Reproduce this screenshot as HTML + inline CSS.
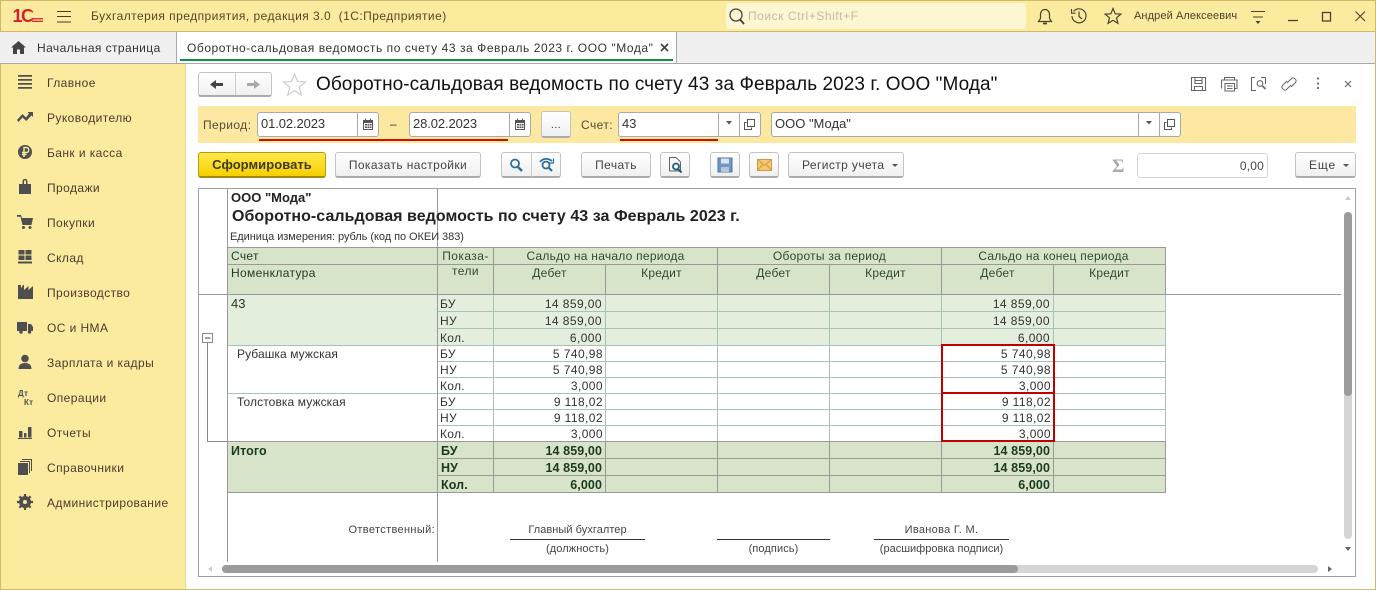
<!DOCTYPE html>
<html><head><meta charset="utf-8"><style>
html,body{margin:0;padding:0}
body{width:1376px;height:590px;overflow:hidden;position:relative;background:#fff;font:12px "Liberation Sans",Arial,sans-serif;color:#333}
div,span,svg{position:absolute;box-sizing:border-box}
.t{white-space:pre;line-height:16px;letter-spacing:.3px}
.l{background:#999}
.s{left:47px;color:#4a3b30;font-size:12px;letter-spacing:.42px}
.f{background:#fff;border:1px solid #aaa;border-radius:3px;height:25px;top:112px}
.b{background:linear-gradient(#fff,#f0f0f0);border:1px solid #c4c4c4;border-bottom:2px solid #ababab;border-radius:3px;height:26px;top:152px;text-align:center;line-height:24px;color:#444;letter-spacing:.4px;white-space:pre}
.r{text-align:right;width:100px;letter-spacing:.42px;color:#333}
.g{color:#1f3a2a}
.B{font-weight:bold;color:#1b3a22;letter-spacing:.1px;font-size:12.5px}
.c{text-align:center;color:#2c4a34;letter-spacing:.25px}
.p{left:440px;color:#333}
.d{font-size:13px;letter-spacing:-.1px}
</style></head><body>
<!-- top bar -->
<div style="left:0;top:0;width:1376px;height:32px;background:#fbeb9e;border:1px solid #c9ba6c;border-bottom:1px solid #c9ba6c"></div>
<div style="left:0;top:32px;width:1376px;height:32px;background:#f0f0f0;border-bottom:1px solid #a9a9a9"></div>
<div style="left:0;top:64px;width:186px;height:525px;background:#fbeb9e;border-left:1px solid #c9ba6c"></div>
<div style="left:185px;top:64px;width:1px;height:525px;background:#e8dc94"></div>
<div style="left:0;top:589px;width:1376px;height:1px;background:#c9ba6c"></div>
<div style="left:1375px;top:0;width:1px;height:590px;background:#c9ba6c"></div>
<!-- logo -->
<svg style="left:12px;top:6px" width="34" height="18">
<text x="0.500" y="16" font-family="Liberation Sans" font-weight="bold" font-size="18" fill="#d5202a">1</text>
<text x="9" y="16" font-family="Liberation Sans" font-weight="bold" font-size="18" fill="#d5202a">С</text>
<path d="M20.500 11.500C17.500 14 13.500 12.500 13.500 9.500C13.500 6.500 17.500 5 20.500 7" fill="none" stroke="#fbeb9e" stroke-width="1"/>
<path d="M20 12.800H31" stroke="#d5202a" stroke-width="1.300"/>
<path d="M20 15.300H31" stroke="#d5202a" stroke-width="1.300"/>
</svg>
<svg style="left:57px;top:9px" width="14" height="15"><path d="M0 2.500H14M0 7.500H14M0 13H14" stroke="#4a3d28" stroke-width="1.100"/></svg>
<span class="t" style="left:91px;top:8px;color:#5a4426;letter-spacing:.46px">Бухгалтерия предприятия, редакция 3.0  (1С:Предприятие)</span>
<!-- search -->
<div style="left:726px;top:3px;width:300px;height:26px;background:#fdf6d0;border-radius:3px"></div>
<svg style="left:728px;top:7px" width="18" height="19"><circle cx="8" cy="8" r="6" fill="none" stroke="#444" stroke-width="1.300"/><path d="M12 12.500L16 17" stroke="#444" stroke-width="2"/></svg>
<span class="t" style="left:748px;top:8px;color:#bcbcb0;letter-spacing:.55px">Поиск Ctrl+Shift+F</span>
<svg style="left:1036px;top:7px" width="18" height="19"><path d="M2.500 14.500H15.500L13.500 11.500V7.500C13.500 4.500 11.500 2.500 9 2.500C6.500 2.500 4.500 4.500 4.500 7.500V11.500Z" fill="none" stroke="#4a4232" stroke-width="1.200"/><path d="M7 16.500H11" stroke="#4a4232" stroke-width="1.800"/></svg>
<svg style="left:1070px;top:7px" width="18" height="18"><path d="M3.500 4.500A7 7 0 1 1 2 9" fill="none" stroke="#4a4232" stroke-width="1.200"/><path d="M1.500 2V6.200H5.500" fill="none" stroke="#4a4232" stroke-width="1.100"/><path d="M9 4.500V9.500L12 12" fill="none" stroke="#4a4232" stroke-width="1.200"/></svg>
<svg style="left:1104px;top:7px" width="18" height="18"><path d="M9 1.500L11.200 6.800L16.800 7.200L12.500 10.800L13.900 16.300L9 13.300L4.100 16.300L5.500 10.800L1.200 7.200L6.800 6.800Z" fill="none" stroke="#4a4232" stroke-width="1.200"/></svg>
<span class="t" style="left:1134px;top:8px;font-size:11px;color:#4a4232;letter-spacing:.1px">Андрей Алексеевич</span>
<svg style="left:1251px;top:10px" width="14" height="15"><path d="M0 1.500H14M2 7H12" stroke="#4a4232" stroke-width="1.100"/><path d="M4.500 11H9.500L7 14Z" fill="#4a4232"/></svg>
<svg style="left:1286px;top:8px" width="80" height="16"><path d="M2 12.500H12" stroke="#4a4232" stroke-width="1.300"/><rect x="36.500" y="4.500" width="8" height="8.500" fill="none" stroke="#4a4232" stroke-width="1.300"/><path d="M69.500 3.500L79 13M79 3.500L69.500 13" stroke="#4a4232" stroke-width="1.100"/></svg>
<!-- tabs -->
<svg style="left:11px;top:41px" width="15" height="13"><path d="M7.500 0L15 6.500H13V13H9V8.500H6V13H2V6.500H0Z" fill="#444"/></svg>
<span class="t" style="left:37px;top:40px;color:#333;letter-spacing:.42px">Начальная страница</span>
<div style="left:176px;top:32px;width:501px;height:32px;background:#fff;border-left:1px solid #a9a9a9;border-right:1px solid #a9a9a9;border-bottom:1px solid #a9a9a9"></div>
<div style="left:180px;top:59px;width:493px;height:2px;background:#119148"></div>
<span class="t" style="left:187px;top:40px;color:#333;letter-spacing:.56px">Оборотно-сальдовая ведомость по счету 43 за Февраль 2023 г. ООО "Мода"</span>
<svg style="left:660px;top:43px" width="9" height="9"><path d="M1 1L8 8M8 1L1 8" stroke="#444" stroke-width="1.700"/></svg>
<!-- sidebar -->
<span class="t s" style="top:75px">Главное</span>
<span class="t s" style="top:110px">Руководителю</span>
<span class="t s" style="top:145px">Банк и касса</span>
<span class="t s" style="top:180px">Продажи</span>
<span class="t s" style="top:215px">Покупки</span>
<span class="t s" style="top:250px">Склад</span>
<span class="t s" style="top:285px">Производство</span>
<span class="t s" style="top:320px">ОС и НМА</span>
<span class="t s" style="top:355px">Зарплата и кадры</span>
<span class="t s" style="top:390px">Операции</span>
<span class="t s" style="top:425px">Отчеты</span>
<span class="t s" style="top:460px">Справочники</span>
<span class="t s" style="top:495px">Администрирование</span>
<svg style="left:16px;top:74px" width="18" height="450">
<g fill="#4f4f4f">
<path d="M2 1H16V2.800H2ZM2 5H16V6.800H2ZM2 9H16V10.800H2ZM2 13H16V14.800H2Z"/>
<path d="M1 46L6.500 40L10 43.500L13 39.500L11.500 38H17V43L15.500 41.500L10.200 47L6.500 43.500L2.500 48Z"/>
<circle cx="9" cy="78" r="7"/>
<path d="M3 110H15V120H3Z"/>
<path d="M6.500 110V107.500C6.500 104 11.500 104 11.500 107.500V110H10V107.500C10 105.800 8 105.800 8 107.500V110Z"/>
<path d="M1 141H5L6 144H17L15.500 151H6.500L4.500 142.800H1Z"/><circle cx="7.500" cy="153.500" r="1.500"/><circle cx="14" cy="153.500" r="1.500"/>
<path d="M2.500 176H8.500V180.500H2.500ZM9.500 176H15.500V180.500H9.500ZM2.500 181.500H8.500V186H2.500ZM9.500 181.500H15.500V186H9.500ZM2 187.500H16V189.500H2Z"/>
<path d="M2 225V211H5V214.500L7 211H8V216L12.500 212V216L17 212V225Z"/>
<path d="M1 248H11V257H1ZM12 250H15L17 253V257H12Z"/><circle cx="5" cy="258" r="1.700"/><circle cx="13.500" cy="258" r="1.700"/>
<circle cx="9" cy="284.500" r="3.800"/><path d="M2.500 295C2.500 290 6 289 9 289C12 289 15.500 290 15.500 295Z"/>
<path d="M3 357H6.500V363.500H3ZM8 359H10.500V363.500H8ZM12 353H15.500V363.500H12ZM2 364H16V365H2Z"/>
<path d="M2 389H12V401H2Z"/><path d="M4 387H14V399H13V388H4ZM6 385H16V397H15V386H6Z"/>
<circle cx="9" cy="428" r="4.500" fill="none" stroke="#4f4f4f" stroke-width="3"/>
<path d="M9 420V436M1 428H17M3.400 422.400L14.600 433.600M14.600 422.400L3.400 433.600" stroke="#4f4f4f" stroke-width="2.200"/>
</g>
<circle cx="9" cy="428" r="2" fill="#fbeb9e"/>
<path d="M8 83V73.500H10.500C13.500 73.500 13.500 78.500 10.500 78.500H6M6 80.500H10.500" fill="none" stroke="#fbeb9e" stroke-width="1.400"/>
</svg>
<span class="t" style="left:18px;top:390px;font:bold 8px/8px 'Liberation Sans',sans-serif;color:#4f4f4f">Дт</span>
<span class="t" style="left:24px;top:399px;font:bold 8px/8px 'Liberation Sans',sans-serif;color:#4f4f4f">Кт</span>
<!-- title row -->
<div class="b" style="left:198px;top:72px;width:74px;height:25px"></div>
<div style="left:235px;top:73px;width:1px;height:22px;background:#ccc"></div>
<svg style="left:209px;top:78px" width="52" height="14"><path d="M1 6.500L7 2V5H14V8H7V11Z" fill="#444"/><path d="M51 6.500L45 2V5H38V8H45V11Z" fill="#aaa"/></svg>
<svg style="left:282px;top:72px" width="25" height="25"><path d="M12.500 2L15.500 9.500L23.500 10L17.300 15.200L19.300 23L12.500 18.700L5.700 23L7.700 15.200L1.500 10L9.500 9.500Z" fill="#fff" stroke="#c9c9c9" stroke-width="1.100"/></svg>
<span class="t" style="left:316px;top:73px;font-size:19px;line-height:24px;color:#111;letter-spacing:.07px">Оборотно-сальдовая ведомость по счету 43 за Февраль 2023 г. ООО "Мода"</span>
<svg style="left:1190px;top:75px" width="170" height="18" fill="none" stroke="#666" stroke-width="1.100">
<path d="M1.500 2.500H15.500V15.500H1.500ZM5 2.500V8.500H12V2.500M5 5.500H12M4.500 15.500V11.500H12.500V15.500"/>
<path d="M34.500 5V2.500H44.500V5M31.500 13.500V5H47V13.500H44M35 8.500H44.500V16H35ZM37 11H42.500M37 13.500H42.500"/>
<path d="M65 2.500H61.500V15.500H66M71 2.500H75.500V9"/><circle cx="70" cy="8.500" r="2.800"/><path d="M72.500 11L75.500 14" stroke-width="1.600"/>
<path d="M97 8L101.500 3.500C103.500 1.500 107.500 5 105.500 7.500L101 12" stroke-width="1"/>
<path d="M101 10L96.500 14.500C94.500 16.500 90.500 13 92.500 10.500L97 6" stroke-width="1"/>
<circle cx="128" cy="3.500" r="1.100" fill="#666" stroke="none"/><circle cx="128" cy="8.500" r="1.100" fill="#666" stroke="none"/><circle cx="128" cy="13" r="1.100" fill="#666" stroke="none"/>
<path d="M155 6L161 12M161 6L155 12"/>
</svg>
<!-- form bar -->
<div style="left:198px;top:106px;width:1158px;height:37px;background:#fce8a0"></div>
<span class="t" style="left:203px;top:117px;color:#55493a;letter-spacing:.42px">Период:</span>
<div class="f" style="left:257px;width:122px"></div><div style="left:357px;top:112px;width:1px;height:25px;background:#aaa"></div>
<span class="t d" style="left:261px;top:116px">01.02.2023</span>
<span class="t" style="left:390px;top:116px">–</span>
<div class="f" style="left:409px;width:122px"></div><div style="left:509px;top:112px;width:1px;height:25px;background:#aaa"></div>
<span class="t d" style="left:413px;top:116px">28.02.2023</span>
<svg style="left:362px;top:118px" width="166" height="12" fill="#555"><path d="M1 2H3V0.500H4V2H8V0.500H9V2H11V12H1ZM2 5V11H10V5Z"/><path d="M3 6H5V7.500H3ZM5.500 6H7.500V7.500H5.500ZM8 6H9.500V7.500H8ZM3 8.500H5V10H3ZM5.500 8.500H7.500V10H5.500ZM8 8.500H9.500V10H8Z"/><path d="M153 2H155V0.500H156V2H160V0.500H161V2H163V12H153ZM154 5V11H162V5Z"/><path d="M155 6H157V7.500H155ZM157.500 6H159.500V7.500H157.500ZM160 6H161.500V7.500H160ZM155 8.500H157V10H155ZM157.500 8.500H159.500V10H157.500ZM160 8.500H161.500V10H160Z"/></svg>
<div style="left:259px;top:139px;width:249px;height:2px;background:#c8120c"></div>
<div style="left:620px;top:139px;width:98px;height:2px;background:#c8120c"></div>
<div class="b" style="left:541px;top:111px;width:30px;height:27px;font-size:11px;line-height:27px">...</div>
<span class="t" style="left:581px;top:117px;color:#55493a;letter-spacing:.42px">Счет:</span>
<div class="f" style="left:618px;width:143px"></div>
<div style="left:718px;top:112px;width:1px;height:25px;background:#aaa"></div><div style="left:739px;top:112px;width:1px;height:25px;background:#aaa"></div>
<span class="t d" style="left:622px;top:116px">43</span>
<div class="f" style="left:771px;width:410px"></div>
<div style="left:1138px;top:112px;width:1px;height:25px;background:#aaa"></div><div style="left:1159px;top:112px;width:1px;height:25px;background:#aaa"></div>
<span class="t" style="left:775px;top:116px;font-size:13px;letter-spacing:0">ООО "Мода"</span>
<svg style="left:724px;top:118px" width="456" height="13" fill="none" stroke="#555"><path d="M2 3H8L5 6.500Z" fill="#555" stroke="none"/><path d="M422 3H428L425 6.500Z" fill="#555" stroke="none"/><path d="M22.500 4.500H20.500V11.500H27.500V9.500M23.500 1.500H30.500V8.500H23.500Z"/><path d="M442.500 4.500H440.500V11.500H447.500V9.500M443.500 1.500H450.500V8.500H443.500Z"/></svg>
<!-- buttons -->
<div class="b" style="left:198px;width:128px;background:linear-gradient(#ffe84a,#f6d000);border-color:#b79a10;border-bottom-color:#a58a0c;font-weight:bold;color:#3f3a20;letter-spacing:.05px;font-size:13px">Сформировать</div>
<div class="b" style="left:335px;width:146px">Показать настройки</div>
<div class="b" style="left:501px;width:60px"></div><div style="left:531px;top:153px;width:1px;height:24px;background:#ccc"></div>
<svg style="left:508px;top:157px" width="48" height="16" fill="none" stroke="#2f6e9e" stroke-width="1.800"><circle cx="7" cy="6.500" r="4"/><path d="M10 10L14 14" stroke-width="2.400"/><circle cx="38" cy="8" r="3.500"/><path d="M41 11L44 14" stroke-width="2.200"/><path d="M32 5C35 1 40 1 44 4"/><path d="M45.500 1.500V6H41" stroke-width="1.200"/></svg>
<div class="b" style="left:581px;width:70px">Печать</div>
<div class="b" style="left:660px;width:30px"></div>
<svg style="left:668px;top:157px" width="16" height="17" fill="none"><path d="M1.500 0.500H8L12.500 5V14H1.500Z" stroke="#666"/><circle cx="8" cy="9.500" r="3" stroke="#1d5f85" stroke-width="1.800"/><path d="M10 12L13.500 15.500" stroke="#1d5f85" stroke-width="2.200"/></svg>
<div class="b" style="left:710px;width:30px"></div>
<svg style="left:717px;top:157px" width="16" height="16"><path d="M1 1H15V15H1Z" fill="#6f97c4" stroke="#4d76a4"/><path d="M4 1.500H12V6.500H4Z" fill="#dbe6f2"/><path d="M4 10H12V15H4Z" fill="#b9c6d4"/></svg>
<div class="b" style="left:749px;width:30px"></div>
<svg style="left:757px;top:159px" width="15" height="12"><path d="M.5.500H14.500V11.500H.5Z" fill="#f3c774" stroke="#d39a3c"/><path d="M.5.500L7.500 6.500L14.500.5M.5 11.500L5.500 5.500M14.500 11.500L9.500 5.500" fill="none" stroke="#d39a3c"/></svg>
<div class="b" style="left:788px;width:116px;text-align:left;padding-left:13px">Регистр учета</div>
<svg style="left:891px;top:163px" width="8" height="5"><path d="M1 1H7L4 4Z" fill="#555"/></svg>
<span class="t" style="left:1112px;top:157px;font:bold 19px/19px 'Liberation Serif',serif;color:#aaa">Σ</span>
<div style="left:1137px;top:153px;width:131px;height:25px;background:#fff;border:1px solid #d8d8d8;border-radius:3px"></div>
<span class="t" style="left:1164px;top:158px;width:100px;text-align:right;color:#444;letter-spacing:.2px">0,00</span>
<div class="b" style="left:1295px;width:61px;text-align:left;padding-left:13px;letter-spacing:.9px">Еще</div>
<svg style="left:1342px;top:163px" width="8" height="5"><path d="M1 1H7L4 4Z" fill="#555"/></svg>
<!-- report frame -->
<div style="left:198px;top:188px;width:1158px;height:389px;border:1px solid #a0a0a0"></div>
<!-- fills -->
<div style="left:228px;top:248px;width:937px;height:46px;background:#d8e4ca"></div>
<div style="left:228px;top:295px;width:937px;height:50px;background:#e4eedd"></div>
<div style="left:228px;top:442px;width:937px;height:50px;background:#d8e4ca"></div>
<!-- horizontal rules header/total -->
<div class="l" style="left:228px;top:247px;width:938px;height:1px"></div>
<div class="l" style="left:228px;top:264px;width:938px;height:1px"></div>
<div class="l" style="left:199px;top:294px;width:1142px;height:1px"></div>
<div class="l" style="left:228px;top:441px;width:938px;height:1px"></div>
<div class="l" style="left:438px;top:458px;width:728px;height:1px"></div>
<div class="l" style="left:438px;top:475px;width:728px;height:1px"></div>
<div class="l" style="left:228px;top:492px;width:938px;height:1px"></div>
<!-- body rules -->
<div style="left:438px;top:311px;width:727px;height:1px;background:#a9c2b8"></div>
<div style="left:438px;top:328px;width:727px;height:1px;background:#a9c2b8"></div>
<div style="left:228px;top:345px;width:937px;height:1px;background:#a9c2b8"></div>
<div style="left:438px;top:361px;width:727px;height:1px;background:#a9c2b8"></div>
<div style="left:438px;top:377px;width:727px;height:1px;background:#a9c2b8"></div>
<div style="left:228px;top:393px;width:937px;height:1px;background:#a9c2b8"></div>
<div style="left:438px;top:409px;width:727px;height:1px;background:#a9c2b8"></div>
<div style="left:438px;top:425px;width:727px;height:1px;background:#a9c2b8"></div>
<!-- vertical rules -->
<div class="l" style="left:227px;top:189px;width:1px;height:373px"></div>
<div class="l" style="left:437px;top:189px;width:1px;height:373px"></div>
<div class="l" style="left:493px;top:247px;width:1px;height:48px"></div>
<div class="l" style="left:605px;top:265px;width:1px;height:30px"></div>
<div class="l" style="left:717px;top:247px;width:1px;height:48px"></div>
<div class="l" style="left:829px;top:265px;width:1px;height:30px"></div>
<div class="l" style="left:941px;top:247px;width:1px;height:48px"></div>
<div class="l" style="left:1053px;top:265px;width:1px;height:30px"></div>
<div class="l" style="left:1165px;top:247px;width:1px;height:48px"></div>
<div style="left:493px;top:295px;width:1px;height:146px;background:#a9c2b8"></div>
<div style="left:605px;top:295px;width:1px;height:146px;background:#a9c2b8"></div>
<div style="left:717px;top:295px;width:1px;height:146px;background:#a9c2b8"></div>
<div style="left:829px;top:295px;width:1px;height:146px;background:#a9c2b8"></div>
<div style="left:941px;top:295px;width:1px;height:146px;background:#a9c2b8"></div>
<div style="left:1053px;top:295px;width:1px;height:146px;background:#a9c2b8"></div>
<div style="left:1165px;top:295px;width:1px;height:146px;background:#a9c2b8"></div>
<div class="l" style="left:493px;top:442px;width:1px;height:51px"></div>
<div class="l" style="left:605px;top:442px;width:1px;height:51px"></div>
<div class="l" style="left:717px;top:442px;width:1px;height:51px"></div>
<div class="l" style="left:829px;top:442px;width:1px;height:51px"></div>
<div class="l" style="left:941px;top:442px;width:1px;height:51px"></div>
<div class="l" style="left:1053px;top:442px;width:1px;height:51px"></div>
<div class="l" style="left:1165px;top:442px;width:1px;height:51px"></div>
<!-- tree -->
<svg style="left:202px;top:332px" width="26" height="112"><rect x=".5" y="1.500" width="10" height="9" fill="#fff" stroke="#888"/><path d="M3 6H8.500" stroke="#444"/><path d="M5.500 11V109.500H25" fill="none" stroke="#888"/></svg>
<!-- report titles -->
<span class="t" style="left:231px;top:190px;font-size:13px;font-weight:bold;color:#222;letter-spacing:0">ООО "Мода"</span>
<span class="t" style="left:232px;top:207px;font:bold 16px/20px 'Liberation Sans',sans-serif;color:#222;letter-spacing:.05px">Оборотно-сальдовая ведомость по счету 43 за Февраль 2023 г.</span>
<span class="t" style="left:230px;top:229px;font-size:11px;color:#333;letter-spacing:-.05px">Единица измерения: рубль (код по ОКЕИ 383)</span>
<!-- header text -->
<span class="t g" style="left:231px;top:248px;letter-spacing:.3px">Счет</span>
<span class="t g" style="left:231px;top:265px;letter-spacing:.35px">Номенклатура</span>
<span class="t c" style="left:438px;top:248px;width:55px;letter-spacing:.42px">Показа-</span>
<span class="t c" style="left:438px;top:263px;width:55px;letter-spacing:.42px">тели</span>
<span class="t c" style="left:494px;top:248px;width:223px">Сальдо на начало периода</span>
<span class="t c" style="left:718px;top:248px;width:223px">Обороты за период</span>
<span class="t c" style="left:942px;top:248px;width:223px">Сальдо на конец периода</span>
<span class="t c" style="left:494px;top:265px;width:111px">Дебет</span>
<span class="t c" style="left:606px;top:265px;width:111px">Кредит</span>
<span class="t c" style="left:718px;top:265px;width:111px">Дебет</span>
<span class="t c" style="left:830px;top:265px;width:111px">Кредит</span>
<span class="t c" style="left:942px;top:265px;width:111px">Дебет</span>
<span class="t c" style="left:1054px;top:265px;width:111px">Кредит</span>
<!-- rows -->
<span class="t g" style="left:231px;top:296px;font-size:13px;letter-spacing:0">43</span>
<span class="t p" style="top:296px">БУ</span><span class="t p" style="top:313px">НУ</span><span class="t p" style="top:330px">Кол.</span>
<span class="t r" style="left:502px;top:296px">14 859,00</span><span class="t r" style="left:950px;top:296px">14 859,00</span>
<span class="t r" style="left:502px;top:313px">14 859,00</span><span class="t r" style="left:950px;top:313px">14 859,00</span>
<span class="t r" style="left:502px;top:330px">6,000</span><span class="t r" style="left:950px;top:330px">6,000</span>
<span class="t" style="left:237px;top:346px;letter-spacing:.08px">Рубашка мужская</span>
<span class="t p" style="top:346px">БУ</span><span class="t p" style="top:362px">НУ</span><span class="t p" style="top:378px">Кол.</span>
<span class="t r" style="left:503px;top:346px">5 740,98</span><span class="t r" style="left:951px;top:346px">5 740,98</span>
<span class="t r" style="left:503px;top:362px">5 740,98</span><span class="t r" style="left:951px;top:362px">5 740,98</span>
<span class="t r" style="left:503px;top:378px">3,000</span><span class="t r" style="left:951px;top:378px">3,000</span>
<span class="t" style="left:237px;top:394px;letter-spacing:.1px">Толстовка мужская</span>
<span class="t p" style="top:394px">БУ</span><span class="t p" style="top:410px">НУ</span><span class="t p" style="top:426px">Кол.</span>
<span class="t r" style="left:503px;top:394px">9 118,02</span><span class="t r" style="left:951px;top:394px">9 118,02</span>
<span class="t r" style="left:503px;top:410px">9 118,02</span><span class="t r" style="left:951px;top:410px">9 118,02</span>
<span class="t r" style="left:503px;top:426px">3,000</span><span class="t r" style="left:951px;top:426px">3,000</span>
<span class="t B" style="left:231px;top:443px">Итого</span>
<span class="t B" style="left:441px;top:443px">БУ</span><span class="t B" style="left:441px;top:460px">НУ</span><span class="t B" style="left:441px;top:477px">Кол.</span>
<span class="t r B" style="left:502px;top:443px">14 859,00</span><span class="t r B" style="left:950px;top:443px">14 859,00</span>
<span class="t r B" style="left:502px;top:460px">14 859,00</span><span class="t r B" style="left:950px;top:460px">14 859,00</span>
<span class="t r B" style="left:502px;top:477px">6,000</span><span class="t r B" style="left:950px;top:477px">6,000</span>
<!-- red boxes -->
<div style="left:941px;top:344px;width:114px;height:50px;border:2px solid #c00000"></div>
<div style="left:941px;top:392px;width:114px;height:50px;border:2px solid #c00000"></div>
<!-- signature -->
<span class="t" style="left:335px;top:522px;width:100px;text-align:right;font-size:11px;letter-spacing:.35px;color:#444">Ответственный:</span>
<span class="t" style="left:510px;top:522px;width:135px;text-align:center;font-size:11px;letter-spacing:.05px;color:#444">Главный бухгалтер</span>
<span class="t" style="left:510px;top:541px;width:135px;text-align:center;font-size:11px;letter-spacing:.1px;color:#444">(должность)</span>
<span class="t" style="left:717px;top:541px;width:113px;text-align:center;font-size:11px;letter-spacing:.1px;color:#444">(подпись)</span>
<span class="t" style="left:874px;top:522px;width:135px;text-align:center;font-size:11px;letter-spacing:.3px;color:#444">Иванова Г. М.</span>
<span class="t" style="left:874px;top:541px;width:135px;text-align:center;font-size:11px;letter-spacing:0;color:#444">(расшифровка подписи)</span>
<div style="left:510px;top:539px;width:135px;height:1px;background:#333"></div>
<div style="left:717px;top:539px;width:113px;height:1px;background:#333"></div>
<div style="left:874px;top:539px;width:135px;height:1px;background:#333"></div>
<!-- scrollbars -->
<div style="left:222px;top:565px;width:1096px;height:8px;background:#d5d5d5;border-radius:4px"></div>
<div style="left:222px;top:565px;width:796px;height:8px;background:#9b9b9b;border-radius:4px"></div>
<div style="left:1344px;top:212px;width:8px;height:327px;background:#d5d5d5;border-radius:4px"></div>
<div style="left:1344px;top:212px;width:8px;height:184px;background:#9b9b9b;border-radius:4px"></div>
<svg style="left:207px;top:566px" width="6" height="7"><path d="M5 0V6L1 3Z" fill="#ccc"/></svg>
<svg style="left:1327px;top:566px" width="6" height="7"><path d="M1 0V6L5 3Z" fill="#666"/></svg>
<svg style="left:1344px;top:546px" width="8" height="6"><path d="M1 1H7L4 5Z" fill="#666"/></svg>
<svg style="left:1344px;top:195px" width="8" height="6"><path d="M1 5H7L4 1Z" fill="#ccc"/></svg>
</body></html>
